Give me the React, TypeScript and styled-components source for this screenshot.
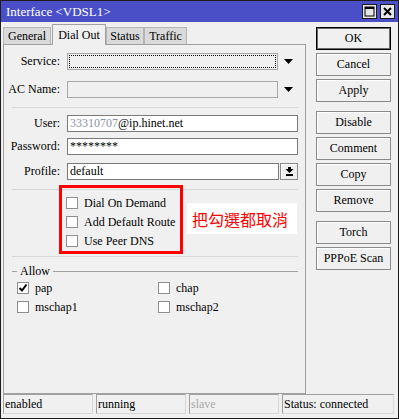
import React from 'react';
import styled, { createGlobalStyle } from 'styled-components';

const GlobalStyle = createGlobalStyle`
  html, body { margin: 0; padding: 0; background: #f0f0f0; }
  body {
    font-family: "Liberation Serif", "Noto Sans CJK TC", serif;
    font-size: 12px;
    color: #000;
  }
  * { box-sizing: border-box; }
`;

const Window = styled.div`
  width: 399px;
  height: 419px;
  border: 1px solid #1c1c1c;
  background: #f0f0f0;
  display: flex;
  flex-direction: column;
`;

const TitleBar = styled.div`
  height: 21px;
  flex: none;
  background: #4a4fc8;
  color: #fff;
  display: flex;
  align-items: center;
  padding: 0 3px 0 5px;
  font-size: 13px;
`;

const Title = styled.span`
  flex: 1;
  white-space: nowrap;
`;

const WinButton = styled.div`
  width: 15px;
  height: 15px;
  margin-left: 3px;
  border: 1px solid #1a1a1a;
  background: #e6e6e6;
  display: flex;
  align-items: center;
  justify-content: center;
`;

const Main = styled.div`
  display: flex;
  height: 372px;
  flex: none;
  padding: 2px 0 0 2px;
`;

const LeftCol = styled.div`
  width: 303px;
  display: flex;
  flex-direction: column;
`;

const Tabs = styled.div`
  height: 20px;
  display: flex;
  align-items: flex-end;
`;

const Tab = styled.div<{ $active?: boolean; $w: number }>`
  width: ${p => p.$w}px;
  height: ${p => (p.$active ? 21 : 17)}px;
  margin-bottom: ${p => (p.$active ? -1 : 0)}px;
  position: relative;
  z-index: ${p => (p.$active ? 1 : 0)};
  background: ${p => (p.$active ? '#f0f0f0' : '#dadada')};
  border: 1px solid ${p => (p.$active ? '#a0a0a0' : '#b4b4b4')};
  border-bottom: none;
  display: flex;
  align-items: center;
  justify-content: center;
  padding-top: ${p => (p.$active ? 0 : 1)}px;
  white-space: nowrap;
`;

const Panel = styled.div`
  position: relative;
  height: 350px;
  border: 1px solid #a0a0a0;
  display: flex;
  flex-direction: column;
`;

const Row = styled.div<{ $mt: number }>`
  display: grid;
  grid-template-columns: 56px 1fr;
  column-gap: 7px;
  align-items: center;
  height: 17px;
  margin-top: ${p => p.$mt}px;
  padding-right: 7px;
`;

const Label = styled.span`
  text-align: right;
  white-space: nowrap;
`;

const Control = styled.div`
  display: flex;
  align-items: center;
  height: 17px;
  gap: 1px;
`;

const Field = styled.div<{ $kind?: 'white' | 'disabled' | 'focused' }>`
  position: relative;
  flex: 1;
  height: 17px;
  background: ${p => (p.$kind === 'white' || !p.$kind ? '#fff' : '#f0f0f0')};
  border: 1px solid ${p => (p.$kind === 'white' || !p.$kind ? '#7a7a7a' : '#a8a8a8')};
  padding-left: 2px;
  line-height: 15px;
  white-space: nowrap;
  overflow: hidden;
  &::after {
    content: '';
    display: ${p => (p.$kind === 'focused' ? 'block' : 'none')};
    position: absolute;
    inset: 1px;
    border: 1px dotted #000;
  }
`;

const ArrowSlot = styled.div`
  width: 19px;
  height: 17px;
  display: flex;
  align-items: center;
  justify-content: center;
`;

const SmallButton = styled.div`
  width: 18px;
  height: 17px;
  border: 1px solid #8a8a8a;
  box-shadow: inset 1px 1px 0 #fff;
  background: #f0f0f0;
  display: flex;
  align-items: center;
  justify-content: center;
`;

const Masked = styled.span`
  color: #8d93a8;
`;

const Separator = styled.div<{ $mt: number }>`
  height: 1px;
  flex: none;
  margin: ${p => p.$mt}px 7px 0 8px;
  background: #d8d8d8;
`;

const CheckList = styled.div`
  display: flex;
  flex-direction: column;
  gap: 7px;
  margin-top: 7px;
  padding-left: 62px;
`;

const CheckRow = styled.div`
  display: flex;
  align-items: center;
  height: 12px;
  gap: 6px;
  white-space: nowrap;
`;

const Box = styled.div`
  width: 12px;
  height: 12px;
  flex: none;
  background: #fff;
  border: 1px solid #8e8e8e;
  display: flex;
  align-items: center;
  justify-content: center;
`;

const Legend = styled.div`
  display: flex;
  align-items: center;
  height: 13px;
  margin-top: 8px;
  padding: 0 7px 0 8px;
  gap: 3px;
`;

const LegendLine = styled.div<{ $w?: number }>`
  height: 1px;
  background: #a0a0a0;
  ${p => (p.$w ? `width: ${p.$w}px;` : 'flex: 1;')}
`;

const AllowGrid = styled.div`
  display: grid;
  grid-template-columns: 141px 1fr;
  row-gap: 7px;
  margin-top: 4px;
  padding-left: 13px;
`;

const RedFrame = styled.div`
  position: absolute;
  left: 55px;
  top: 140px;
  width: 124px;
  height: 69px;
  border: 3px solid #ff0000;
`;

const Note = styled.div`
  position: absolute;
  left: 183px;
  top: 158px;
  width: 110px;
  height: 31px;
  background: #fff;
  color: #ff0000;
  font-family: "Noto Sans CJK TC", sans-serif;
  font-size: 16px;
  display: flex;
  align-items: center;
  padding-left: 5px;
  letter-spacing: 0;
`;

const RightCol = styled.div`
  width: 75px;
  margin-left: 10px;
  padding-top: 3px;
  display: flex;
  flex-direction: column;
  gap: 3px;
`;

const Button = styled.div<{ $primary?: boolean; $space?: boolean }>`
  height: 23px;
  flex: none;
  margin-top: ${p => (p.$space ? 6 : 0)}px;
  border: 1px solid ${p => (p.$primary ? '#000' : '#8a8a8a')};
  box-shadow: ${p => (p.$primary ? 'inset 0 0 0 1px #6a6a6a' : 'inset 1px 1px 0 #fff')};
  background: #f0f0f0;
  display: flex;
  align-items: center;
  justify-content: center;
  white-space: nowrap;
`;

const StatusBar = styled.div`
  display: flex;
  gap: 3px;
  height: 20px;
  flex: none;
  padding-left: 2px;
`;

const StatusCell = styled.div<{ $w: number; $dim?: boolean }>`
  width: ${p => p.$w}px;
  height: 20px;
  border: 1px solid #a0a0a0;
  border-right-color: #d8d8d8;
  border-bottom-color: #d8d8d8;
  color: ${p => (p.$dim ? '#a8a8a8' : '#000')};
  padding-left: 1px;
  line-height: 18px;
  white-space: nowrap;
`;

const DropArrow = () => (
  <svg width="9" height="5" viewBox="0 0 9 5">
    <polygon points="0,0 9,0 4.5,5" fill="#000" />
  </svg>
);

const Tick = () => (
  <svg width="10" height="10" viewBox="0 0 10 10">
    <path d="M1.5 5 L4 7.5 L8.5 1.5" stroke="#000" strokeWidth="2" fill="none" />
  </svg>
);

const Check = ({ label, checked }: { label: string; checked?: boolean }) => (
  <CheckRow>
    <Box>{checked && <Tick />}</Box>
    <span>{label}</span>
  </CheckRow>
);

const tabs = [
  { name: 'General', w: 48 },
  { name: 'Dial Out', w: 54, active: true },
  { name: 'Status', w: 38 },
  { name: 'Traffic', w: 43 },
];

const buttons = [
  { name: 'OK', primary: true },
  { name: 'Cancel' },
  { name: 'Apply' },
  { name: 'Disable', space: true },
  { name: 'Comment' },
  { name: 'Copy' },
  { name: 'Remove' },
  { name: 'Torch', space: true },
  { name: 'PPPoE Scan' },
];

function App() {
  return (
    <>
      <GlobalStyle />
      <Window>
        <TitleBar>
          <Title>{'Interface <VDSL1>'}</Title>
          <WinButton>
            <svg width="11" height="11" viewBox="0 0 11 11">
              <rect x="1" y="1" width="9" height="9" fill="none" stroke="#000" strokeWidth="1" />
              <rect x="1" y="1" width="9" height="2" fill="#000" />
            </svg>
          </WinButton>
          <WinButton>
            <svg width="11" height="11" viewBox="0 0 11 11">
              <path d="M2 2 L9 9 M9 2 L2 9" stroke="#000" strokeWidth="2" />
            </svg>
          </WinButton>
        </TitleBar>

        <Main>
          <LeftCol>
            <Tabs>
              {tabs.map(t => (
                <Tab key={t.name} $w={t.w} $active={t.active} style={t.name === 'General' ? { marginRight: 1 } : undefined}>
                  {t.name}
                </Tab>
              ))}
            </Tabs>
            <Panel>
              <Row $mt={8}>
                <Label>Service:</Label>
                <Control>
                  <Field $kind="focused" />
                  <ArrowSlot><DropArrow /></ArrowSlot>
                </Control>
              </Row>
              <Row $mt={11}>
                <Label>AC Name:</Label>
                <Control>
                  <Field $kind="disabled" />
                  <ArrowSlot><DropArrow /></ArrowSlot>
                </Control>
              </Row>
              <Separator $mt={9} />
              <Row $mt={7}>
                <Label>User:</Label>
                <Control>
                  <Field><Masked>33310707</Masked>@ip.hinet.net</Field>
                </Control>
              </Row>
              <Row $mt={6}>
                <Label>Password:</Label>
                <Control>
                  <Field>********</Field>
                </Control>
              </Row>
              <Row $mt={8}>
                <Label>Profile:</Label>
                <Control>
                  <Field>default</Field>
                  <SmallButton>
                    <svg width="9" height="9" viewBox="0 0 9 9">
                      <rect x="3" y="0" width="3" height="2" fill="#000" />
                      <polygon points="0.5,2 8.5,2 4.5,6" fill="#000" />
                      <rect x="1" y="7" width="7" height="2" fill="#000" />
                    </svg>
                  </SmallButton>
                </Control>
              </Row>
              <Separator $mt={9} />
              <CheckList>
                <Check label="Dial On Demand" />
                <Check label="Add Default Route" />
                <Check label="Use Peer DNS" />
              </CheckList>
              <Separator $mt={9} />
              <Legend>
                <LegendLine $w={5} />
                <span>Allow</span>
                <LegendLine />
              </Legend>
              <AllowGrid>
                <Check label="pap" checked />
                <Check label="chap" />
                <Check label="mschap1" />
                <Check label="mschap2" />
              </AllowGrid>

              <RedFrame />
              <Note>把勾選都取消</Note>
            </Panel>
          </LeftCol>

          <RightCol>
            {buttons.map(b => (
              <Button key={b.name} $primary={b.primary} $space={b.space}>
                {b.name}
              </Button>
            ))}
          </RightCol>
        </Main>

        <StatusBar>
          <StatusCell $w={90}>enabled</StatusCell>
          <StatusCell $w={90}>running</StatusCell>
          <StatusCell $w={90} $dim>slave</StatusCell>
          <StatusCell $w={112}>Status: connected</StatusCell>
        </StatusBar>
      </Window>
    </>
  );
}

export default App;
